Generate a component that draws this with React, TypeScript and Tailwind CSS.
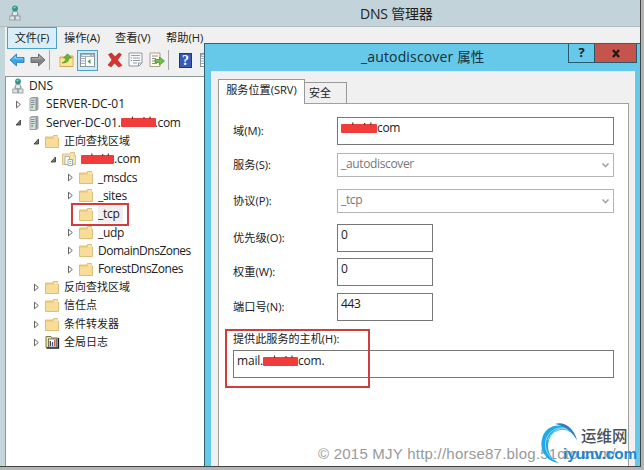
import React from "react";

const Folder = () => (
  <svg width="14" height="13" viewBox="0 0 14 13">
    <path d="M.5 2h7l1-1.500h4V3h1v9.500H.5z" fill="#f0d083" stroke="#d8b468" strokeWidth=".8" />
    <path d="M1 4h7.500L10 2.600h3V12H1z" fill="#f8dd98" />
    <path d="M9 2h3.500" stroke="#fff6cf" />
  </svg>
);

const Server = () => (
  <svg width="10" height="14" viewBox="0 0 10 14">
    <path d="M1 1.500 3 .5h6v12l-2 1H1z" fill="#b5bdc0" stroke="#7c8588" strokeWidth=".7" />
    <path d="M1.500 2h4.500v11H1.500z" fill="#d5dcdf" />
    <path d="M2 3.500h3.500M2 5.500h3.500M2 7.500h3.500" stroke="#78868c" strokeWidth=".9" />
    <path d="M2.300 10h1.700" stroke="#4ea45c" strokeWidth="1.400" />
    <path d="M7.500 1.500v11" stroke="#8c979b" />
  </svg>
);

const Dns = () => (
  <svg width="12" height="16" viewBox="0 0 12 16">
    <circle cx="6" cy="3.400" r="2.900" fill="#2f9590" />
    <path d="M4 3q1-2 3-1.500L6 3.500z" fill="#8fdcb8" />
    <path d="M6 6v2.500M3 10.500V8.500h6v2" stroke="#8b9699" fill="none" />
    <rect x="3.700" y="6.700" width="4.600" height="4" fill="#e8edef" stroke="#8b9699" strokeWidth=".8" />
    <rect x=".8" y="11" width="4.700" height="4" fill="#dce2e5" stroke="#8b9699" strokeWidth=".8" />
    <rect x="6.300" y="11" width="4.700" height="4" fill="#dce2e5" stroke="#8b9699" strokeWidth=".8" />
  </svg>
);

const Zone = () => (
  <svg width="14" height="14" viewBox="0 0 14 14">
    <path d="M.5 2h7l1-1.500h4V3h1v9.500H.5z" fill="#f6e2a8" stroke="#d8b76d" strokeWidth=".8" />
    <path d="M3 4.500h4.500v8H3z" fill="#fff" stroke="#8aa5b8" strokeWidth=".8" />
    <path d="M6 7.500h4.500v6H6z" fill="#fff" stroke="#7b9bb5" strokeWidth=".8" />
    <path d="M7.500 9.500h1.800M7.500 11.500h1.800" stroke="#4b8fc9" strokeWidth=".8" />
  </svg>
);

const Log = () => (
  <svg width="15" height="14" viewBox="0 0 15 14">
    <path d="M1 12.500V1.500h5l1 1.500h6v9.500z" fill="#f0e58a" stroke="#7d7748" />
    <path d="M13.500 3v10.200H1.500" stroke="#222" fill="none" strokeWidth="1.300" />
    <rect x="3.500" y="4" width="8" height="8" fill="#fff" stroke="#555" strokeWidth=".8" />
    <path d="M5.300 6v5" stroke="#333" strokeWidth="1.200" />
    <path d="M7.500 7v4" stroke="#3757bd" strokeWidth="1.300" />
    <path d="M9.800 5v6" stroke="#c13932" strokeWidth="1.300" />
  </svg>
);

const Expander = ({ open }: { open?: boolean }) => (
  <svg width="7" height="9" viewBox="0 0 7 9">
    {open ? (
      <path d="M5.500 2v5h-4.500z" fill="#777" stroke="#333" strokeWidth=".8" />
    ) : (
      <path d="M1.500 1.200v6.600l3.800-3.300z" fill="#fff" stroke="#555" strokeWidth=".9" />
    )}
  </svg>
);

const Redaction = ({ className }: { className: string }) => (
  <span className={`relative inline-block h-[9px] shrink-0 rounded-[1px] bg-[#f23c3c] ${className}`}>
    <svg className="absolute -top-[2px] left-0 h-[3px] w-full" viewBox="0 0 35 3" preserveAspectRatio="none">
      <path d="M11.500 .5v2.500M23 1v2M29 .5v2.500" stroke="#713030" strokeWidth="1.200" />
    </svg>
  </span>
);

type Node = {
  depth: string;
  icon: React.ReactNode;
  state?: "open" | "closed";
  label: React.ReactNode;
};

const zh = "text-[11px]";

const nodes: Node[] = [
  { depth: "pl-[6px]", icon: <Dns />, label: <span className="-ml-px tracking-[-0.1px]">DNS</span> },
  { depth: "pl-[8px]", state: "closed", icon: <Server />, label: <span className="tracking-[-0.05px]">SERVER-DC-01</span> },
  {
    depth: "pl-[8px]",
    state: "open",
    icon: <Server />,
    label: (
      <>
        <span className="tracking-[-0.15px]">Server-DC-01.</span>
        <Redaction className="w-[35px]" />
        <span className="-ml-px tracking-[-0.4px]">.com</span>
      </>
    ),
  },
  { depth: "pl-[26px]", state: "open", icon: <Folder />, label: <span className={zh}>正向查找区域</span> },
  {
    depth: "pl-[43px]",
    state: "open",
    icon: <Zone />,
    label: (
      <>
        <Redaction className="w-[33px]" />
        <span className="tracking-[-0.2px]">.com</span>
      </>
    ),
  },
  { depth: "pl-[60px]", state: "closed", icon: <Folder />, label: <span className="tracking-[-0.3px]">_msdcs</span> },
  { depth: "pl-[60px]", state: "closed", icon: <Folder />, label: <span className="tracking-[-0.3px]">_sites</span> },
  { depth: "pl-[60px]", icon: <Folder />, label: <span className="bg-[#f0f0f0] pr-1 tracking-[-0.3px]">_tcp</span> },
  { depth: "pl-[60px]", state: "closed", icon: <Folder />, label: <span className="tracking-[-0.3px]">_udp</span> },
  { depth: "pl-[60px]", state: "closed", icon: <Folder />, label: <span className="tracking-[-0.5px]">DomainDnsZones</span> },
  { depth: "pl-[60px]", state: "closed", icon: <Folder />, label: <span className="tracking-[-0.4px]">ForestDnsZones</span> },
  { depth: "pl-[26px]", state: "closed", icon: <Folder />, label: <span className={zh}>反向查找区域</span> },
  { depth: "pl-[26px]", state: "closed", icon: <Folder />, label: <span className={zh}>信任点</span> },
  { depth: "pl-[26px]", state: "closed", icon: <Folder />, label: <span className={zh}>条件转发器</span> },
  { depth: "pl-[26px]", state: "closed", icon: <Log />, label: <span className={zh}>全局日志</span> },
];

const iconColumn = (i: number) => {
  if (i === 0) return "w-[18px]";
  if (i < 3) return "w-[19px] pl-[2px]";
  return "w-[19px]";
};

const Tree = () => (
  <div className="ml-[5px] flex-1 border-l border-t border-[#8c979c] bg-white">
    {nodes.map((n, i) => (
      <div key={i} className={`flex h-[18.3px] items-center ${n.depth}`}>
        {i > 0 && <span className="flex w-[13px] shrink-0 items-center pl-[1px]">{n.state && <Expander open={n.state === "open"} />}</span>}
        <span className={`flex shrink-0 items-center ${iconColumn(i)}`}>{n.icon}</span>
        <span className="flex items-center whitespace-nowrap">{n.label}</span>
      </div>
    ))}
  </div>
);

const Arrow = ({ forward }: { forward?: boolean }) => (
  <svg width="16" height="14" viewBox="0 0 16 14" className={forward ? "-scale-x-100" : ""}>
    <path
      d="M7.500 1 1 7l6.500 6V9.500H15v-5H7.500z"
      fill={forward ? "#858585" : "#35a5e5"}
      stroke={forward ? "#626262" : "#3480b6"}
      strokeWidth=".9"
    />
    <path d="M3.500 6.600 6.700 3.500v2.300H14" fill="none" stroke={forward ? "#b7b7b7" : "#8bd5fa"} />
  </svg>
);

const PaneIcon = () => (
  <svg width="15" height="14" viewBox="0 0 15 14">
    <rect x=".5" y=".5" width="14" height="13" fill="#fff" stroke="#8695a1" />
    <path d="M1 1h13v3H1z" fill="#a4b2be" />
    <path d="M2 2.500h8M12 2.500h1" stroke="#e9f1f6" />
    <path d="M5.500 4v9M1 5.500h4M1 8h4M1 10.500h4" stroke="#9eabb4" />
    <path d="M10.500 6v5L7.500 8.500z" fill="#3da941" />
  </svg>
);

const Toolbar = () => (
  <div className="ml-[5px] flex h-[27px] items-start bg-[#f0f0f0] pt-[1px]">
    <div className="flex h-5 items-center pl-[4px]">
      <Arrow />
      <span className="w-[5px]" />
      <Arrow forward />
      <span className="ml-[3px] mr-[9px] h-[20px] w-px bg-[#a8a8a8]" />
      <svg width="15" height="15" viewBox="0 0 15 15">
        <path d="M1 4h5l1-1h7v10.500H1z" fill="#f1d779" stroke="#c6a44f" strokeWidth=".9" />
        <path d="M1.500 6h12v7h-12z" fill="#fae59b" />
        <path d="M3 10q4-1 4-5H4.500L8.500.8l4 4.200H10q0 5-7 5" fill="#6eb52b" stroke="#438b22" strokeWidth=".6" />
      </svg>
      <span className="ml-[3px] flex h-[21px] w-[21px] items-center justify-center border border-[#4aa2c7] bg-[#cfeaf7]">
        <PaneIcon />
      </span>
      <svg width="16" height="16" viewBox="0 0 16 16" className="ml-[9px]">
        <path d="M1.500 2.500 4.500 1 8 4.800 12 1l2.500 1.500L10.500 8l4.500 5.500-3.500 1.500L7.500 11 4 15l-3-2 4-5z" fill="#d8342f" stroke="#ad211f" strokeWidth=".6" />
      </svg>
      <svg width="15" height="16" viewBox="0 0 15 16" className="ml-[5px]">
        <path d="M1 1h13v10l-3 3H1z" fill="#fafafa" stroke="#8e989f" />
        <path d="M3 3.500h9M5 6h7M5 8.500h7M5 11h4" stroke="#91a1ae" />
        <path d="M2.800 6h1M2.800 8.500h1" stroke="#4774a2" />
        <path d="M10.500 14v-3h3" fill="none" stroke="#8e989f" />
      </svg>
      <svg width="16" height="16" viewBox="0 0 16 16" className="ml-[6px]">
        <path d="M1 1h10v13.500H1z" fill="#fffbe8" stroke="#a6a18d" />
        <path d="M3 4h6M3 6.500h4M3 9h3M3 11.500h5" stroke="#8b929b" />
        <path d="M6 7.500h4.500V5l5 4-5 4v-2.500H6z" fill="#6fbe45" stroke="#438f2c" strokeWidth=".7" />
      </svg>
      <span className="ml-[3px] mr-[10px] h-[20px] w-px bg-[#a8a8a8]" />
      <span className="flex h-[15px] w-[13px] items-center justify-center border border-[#1b3683] bg-[#3859b5] font-['Liberation_Serif',serif] text-[14px] font-bold text-white">
        ?
      </span>
      <span className="ml-[8px] block w-4">
        <PaneIcon />
      </span>
    </div>
  </div>
);

const MenuBar = () => (
  <div className="ml-[5px] flex h-[22px] items-start bg-[#f0f0f0] text-[11.2px]">
    <span className="ml-[2px] flex h-[22px] w-[50px] items-center justify-center border border-[#4aa2c7] bg-[#d9eef8]">文件(F)</span>
    <span className="ml-[7px] flex h-[22px] w-[51px] items-center">操作(A)</span>
    <span className="flex h-[22px] w-[51px] items-center">查看(V)</span>
    <span className="flex h-[22px] items-center">帮助(H)</span>
  </div>
);

const Field = ({ label, gap, children }: { label: string; gap: string; children: React.ReactNode }) => (
  <div className={`flex items-center ${gap}`}>
    <span className="w-[104px] shrink-0 whitespace-nowrap pt-[1px] text-[11.2px]">{label}</span>
    {children}
  </div>
);

const Combo = ({ value }: { value: string }) => (
  <span className="flex h-[24px] w-[277px] items-center justify-between border border-[#b4b4b4] px-[3px] text-[#777]">
    <span className="-mt-[3px] tracking-[-0.35px]">{value}</span>
    <svg width="9" height="7" viewBox="0 0 9 7">
      <path d="m1.500 1.500 3 3 3-3" fill="none" stroke="#a6a6a6" strokeWidth="1.600" />
    </svg>
  </span>
);

const NumberBox = ({ value }: { value: string }) => (
  <span className="flex h-[28px] w-[96px] border border-[#777] pl-[3px] pt-[2px] leading-4 tracking-[-0.3px]">{value}</span>
);

const Dialog = () => (
  <div className="absolute left-[204px] top-[43px] flex h-[423px] w-[436px] flex-col border-l border-t border-[#2c6576] bg-[#66c9e9]">
    <div className="flex h-[27px] shrink-0 items-start">
      <span className="ml-[156px] w-[207px] whitespace-nowrap pt-[3px] text-[14px] leading-[20px] tracking-[0.15px] text-[#143039]">
        _autodiscover <span className="text-[13.5px]">属性</span>
      </span>
      <span className="flex h-[19px] w-[27px] items-center justify-center border border-t-0 border-[#28596a] text-[13px] font-bold">?</span>
      <span className="flex h-[19px] w-[42px] items-center justify-center border border-l-0 border-t-0 border-[#28596a] bg-[#c5554c]">
        <svg width="10" height="9" viewBox="0 0 10 9">
          <path d="m2 1 6 7M8 1 2 8" stroke="#261514" strokeWidth="2.200" />
        </svg>
      </span>
    </div>
    <div className="ml-[6px] flex w-[424px] flex-1 flex-col border-t border-[#d8eef6] bg-[#f0f0f0] pl-[7px] pr-[6px] pt-[7px]">
      <div className="z-10 flex h-[24px] items-end">
        <span className="-mb-px flex h-[25px] w-[87px] items-center justify-center whitespace-nowrap border border-b-0 border-[#999] bg-white pb-[3px] text-[11.1px]">
          服务位置(SRV)
        </span>
        <span className="flex h-[21px] w-[42px] items-center border border-l-0 border-b-0 border-[#999] pl-[4px] text-[11px]">安全</span>
      </div>
      <div className="flex-1 border border-b-0 border-[#a0a0a0] bg-white pl-[14px] pt-[13px]">
        <Field label="域(M):" gap="">
          <span className="flex h-[28px] w-[277px] items-start border border-[#777] pl-[3px] pt-[2px] leading-4 tracking-[-0.3px]">
            <Redaction className="mt-[4px] w-[36px]" />
            com
          </span>
        </Field>
        <Field label="服务(S):" gap="mt-[8px]"><Combo value="_autodiscover" /></Field>
        <Field label="协议(P):" gap="mt-[12px]"><Combo value="_tcp" /></Field>
        <Field label="优先级(O):" gap="mt-[11px]"><NumberBox value="0" /></Field>
        <Field label="权重(W):" gap="mt-[6px]"><NumberBox value="0" /></Field>
        <Field label="端口号(N):" gap="mt-[7px]"><NumberBox value="443" /></Field>
        <div className="mt-[10px] flex h-[19px] items-center pb-[2px] text-[11.1px]">提供此服务的主机(H):</div>
        <div className="flex h-[28px] w-[381px] items-start border border-[#777] pl-[3px] pt-[2px] leading-4 tracking-[-0.2px]">
          mail.
          <Redaction className="mt-[4px] w-[35px]" />
          com.
        </div>
      </div>
    </div>
  </div>
);

const Watermark = () => (
  <>
    <span className="absolute left-[318px] top-[444px] whitespace-nowrap font-['Liberation_Sans',sans-serif] text-[15px] leading-[20px] tracking-[0.23px] text-[#999]">
      © 2015 MJY http://horse87.blog.51cto.com/
    </span>
    <svg className="absolute left-[540px] top-[422px]" width="40" height="42" viewBox="0 0 40 42">
      <path d="M37 18C31-1 6-1 2 17c-3 12 5 23 17 24C10 36 6 27 9 18 14 5 30 4 37 18" fill="#1fa9ea" />
      <path d="M36 15C28 1 10 4 6 18c-2 9 2 16 8 20M35 13C24 1 12 8 8 18" fill="none" stroke="#b5e6fb" strokeWidth=".8" />
      <path d="M15 2C25-1 34 7 37 18 31 8 24 4 15 2" fill="#2c7fc4" />
    </svg>
    <span className="absolute left-[581px] top-[424px] whitespace-nowrap text-[15.5px] font-medium leading-[24px] text-[#4a5058]">运维网</span>
    <span className="absolute left-[563px] top-[444px] whitespace-nowrap font-['Liberation_Sans',sans-serif] text-[15.2px] font-bold leading-[20px] text-[#1787d6]">
      iyunv.com
    </span>
  </>
);

export default function App() {
  return (
    <div className="relative h-[470px] w-[644px] overflow-hidden bg-[#b5b5b5] font-['Open_Sans','Noto_Sans_CJK_SC',sans-serif] text-[12px] text-[#202020]">
      <div className="flex h-[467px] w-[641px] flex-col border-b border-r border-[#444] bg-[#c3d6dc]">
        <div className="flex h-[27px] shrink-0 items-center border-b border-[#b2bdc1] bg-[#c3d3da]">
          <span className="ml-[9px]"><Dns /></span>
          <span className="ml-[339px] whitespace-nowrap text-[14px] tracking-[-0.2px]">DNS 管理器</span>
        </div>
        <MenuBar />
        <Toolbar />
        <Tree />
      </div>
      <Dialog />
      <div className="absolute left-[71px] top-[203px] h-[23px] w-[58px] border-2 border-[#d23c3c]" />
      <div className="absolute left-[225px] top-[329px] h-[59px] w-[145px] border-2 border-[#d23c3c]" />
      <Watermark />
    </div>
  );
}
